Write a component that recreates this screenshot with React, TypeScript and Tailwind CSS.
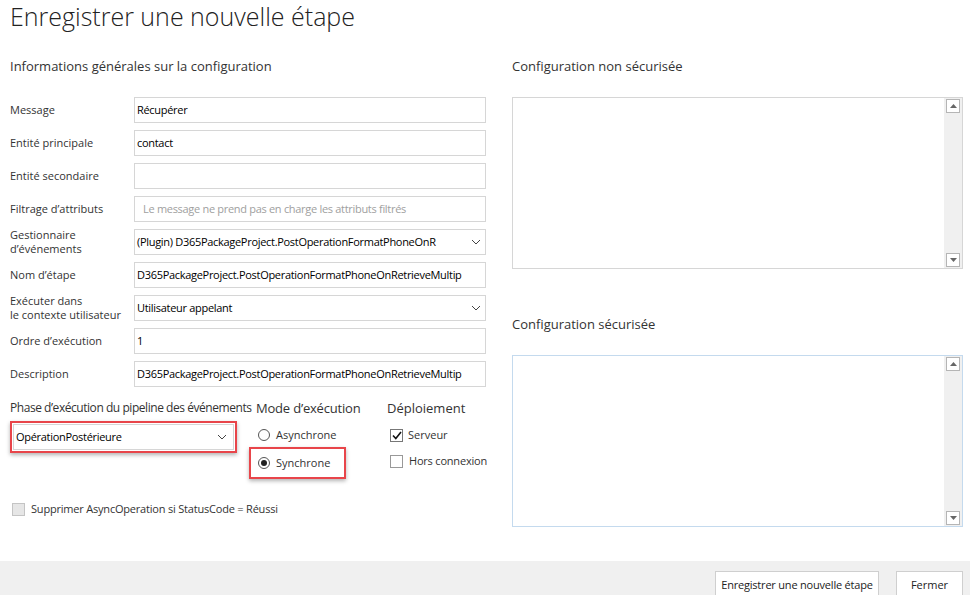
import React from 'react';

const font = { fontFamily: '"Segoe UI", "Open Sans", "Noto Sans", sans-serif' };

const Chevron = () => (
  <svg width="10" height="6" viewBox="0 0 10 6" className="shrink-0">
    <path d="M1 1 L5 5 L9 1" fill="none" stroke="#444" strokeWidth="1" />
  </svg>
);

const Field = ({ label, children }: { label: React.ReactNode; children: React.ReactNode }) => (
  <div className="flex items-center h-[26px]">
    <div className="w-[124px] shrink-0 text-[11px] leading-[14px] text-[#333]">{label}</div>
    {children}
  </div>
);

const TextBox = ({ value, muted }: { value?: string; muted?: boolean }) => (
  <div
    className={
      'flex-1 h-[26px] border border-[#d6d6d6] bg-white flex items-center text-[11px] tracking-[-0.3px] whitespace-nowrap overflow-hidden ' +
      (muted ? 'text-[#a0a0a0] px-[8px]' : 'text-black px-[2px]')
    }
  >
    {value}
  </div>
);

const SelectBox = ({ value }: { value: string }) => (
  <div className="flex-1 h-[26px] border border-[#d6d6d6] bg-white flex items-center justify-between pl-[2px] pr-[4px] text-[11px] tracking-[-0.3px] text-black whitespace-nowrap overflow-hidden">
    <span>{value}</span>
    <Chevron />
  </div>
);

const ScrollArrow = ({ up }: { up?: boolean }) => (
  <div className="w-[14px] h-[14px] border border-[#b5b5b5] bg-white flex items-center justify-center">
    <svg width="7" height="4" viewBox="0 0 7 4">
      {up ? <path d="M0 4 L3.5 0 L7 4 Z" fill="#666" /> : <path d="M0 0 L3.5 4 L7 0 Z" fill="#666" />}
    </svg>
  </div>
);

const TextArea = ({ border }: { border: string }) => (
  <div className={'h-[172px] bg-white flex justify-end border ' + border}>
    <div className="w-[18px] bg-[#f0f0f0] flex flex-col justify-between items-center py-[1px]">
      <ScrollArrow up />
      <ScrollArrow />
    </div>
  </div>
);

export default function App() {
  return (
    <div className="w-[970px] h-[595px] bg-white flex flex-col overflow-hidden text-[#333]" style={font}>
      <div className="flex-1 px-[10px]">
        <h1 className="text-[25px] leading-[32px] font-light text-[#222] tracking-[0px]">
          Enregistrer une nouvelle étape
        </h1>

        <div className="flex mt-[24px]">
          {/* left column */}
          <div className="w-[476px] shrink-0">
            <h2 className="text-[13px] leading-[20px] text-[#333]">Informations générales sur la configuration</h2>

            <div className="mt-[21px] flex flex-col gap-[7px]">
              <Field label="Message">
                <TextBox value="Récupérer" />
              </Field>
              <Field label="Entité principale">
                <TextBox value="contact" />
              </Field>
              <Field label="Entité secondaire">
                <TextBox />
              </Field>
              <Field label="Filtrage d’attributs">
                <TextBox value="Le message ne prend pas en charge les attributs filtrés" muted />
              </Field>
              <Field label={<>Gestionnaire<br />d’événements</>}>
                <SelectBox value="(Plugin) D365PackageProject.PostOperationFormatPhoneOnR" />
              </Field>
              <Field label="Nom d’étape">
                <TextBox value="D365PackageProject.PostOperationFormatPhoneOnRetrieveMultip" />
              </Field>
              <Field label={<>Exécuter dans<br />le contexte utilisateur</>}>
                <SelectBox value="Utilisateur appelant" />
              </Field>
              <Field label="Ordre d’exécution">
                <TextBox value="1" />
              </Field>
              <Field label="Description">
                <TextBox value="D365PackageProject.PostOperationFormatPhoneOnRetrieveMultip" />
              </Field>
            </div>

            <div className="flex mt-[11px]">
              <div className="w-[246px] shrink-0">
                <div className="text-[12px] leading-[20px] whitespace-nowrap tracking-[-0.45px]">
                  Phase d’exécution du pipeline des événements
                </div>
                <div className="mt-[3px] w-[227px] border-2 border-[#e8454a] p-[1px] shadow-[0_2px_4px_rgba(0,0,0,0.3)]">
                  <div className="h-[26px] border border-[#d6d6d6] bg-white flex items-center justify-between pl-[2px] pr-[6px] text-[11px] tracking-[-0.3px] text-black">
                    <span>OpérationPostérieure</span>
                    <Chevron />
                  </div>
                </div>
              </div>

              <div className="w-[131px] shrink-0">
                <div className="text-[13px] leading-[20px] whitespace-nowrap tracking-[-0.2px]">Mode d’exécution</div>
                <div className="mt-[9px] flex items-center h-[16px] pl-[2px] text-[11px]">
                  <span className="w-[12px] h-[12px] rounded-full border border-[#555] bg-white mr-[6px]" />
                  Asynchrone
                </div>
                <div className="mt-[4px] -ml-[7px] w-[97px] h-[32px] border-2 border-[#e8454a] shadow-[0_2px_4px_rgba(0,0,0,0.3)] flex items-center pl-[7px] text-[11px]">
                  <span className="w-[12px] h-[12px] rounded-full border border-[#555] bg-white mr-[6px] flex items-center justify-center">
                    <span className="w-[6px] h-[6px] rounded-full bg-[#222]" />
                  </span>
                  Synchrone
                </div>
              </div>

              <div className="flex-1">
                <div className="text-[13px] leading-[20px] whitespace-nowrap">Déploiement</div>
                <div className="mt-[9px] flex items-center h-[16px] pl-[3px] text-[11px] whitespace-nowrap">
                  <span className="w-[13px] h-[13px] border border-[#777] bg-white mr-[5px] flex items-center justify-center">
                    <svg width="10" height="9" viewBox="0 0 10 9">
                      <path d="M1 4.5 L3.8 7.5 L9 1" fill="none" stroke="#111" strokeWidth="1.6" />
                    </svg>
                  </span>
                  Serveur
                </div>
                <div className="mt-[10px] flex items-center h-[16px] pl-[3px] text-[11px] whitespace-nowrap tracking-[-0.2px]">
                  <span className="w-[13px] h-[13px] shrink-0 border border-[#999] bg-white mr-[6px]" />
                  Hors connexion
                </div>
              </div>
            </div>

            <div className="mt-[22px] flex items-center pl-[2px] text-[11px] tracking-[-0.2px]">
              <span className="w-[13px] h-[13px] border border-[#c4c4c4] bg-[#e6e6e6] mr-[6px]" />
              Supprimer AsyncOperation si StatusCode = Réussi
            </div>
          </div>

          {/* right column */}
          <div className="ml-[26px] w-[451px] shrink-0">
            <h2 className="text-[13px] leading-[20px] text-[#333]">Configuration non sécurisée</h2>
            <div className="mt-[21px]">
              <TextArea border="border-[#d6d6d6]" />
            </div>
            <h2 className="mt-[45px] text-[13px] leading-[20px] text-[#333]">Configuration sécurisée</h2>
            <div className="mt-[21px]">
              <TextArea border="border-[#c4daee]" />
            </div>
          </div>
        </div>
      </div>

      <div className="h-[34px] bg-[#f0f0f0] flex justify-end items-start gap-[17px] pr-[7px] pt-[10px]">
        <button className="h-[28px] w-[164px] border border-[#cfcfcf] bg-white text-[11px] tracking-[-0.2px] text-[#222] whitespace-nowrap">
          Enregistrer une nouvelle étape
        </button>
        <button className="h-[28px] w-[67px] border border-[#cfcfcf] bg-white text-[11px] text-[#222]">Fermer</button>
      </div>
    </div>
  );
}
